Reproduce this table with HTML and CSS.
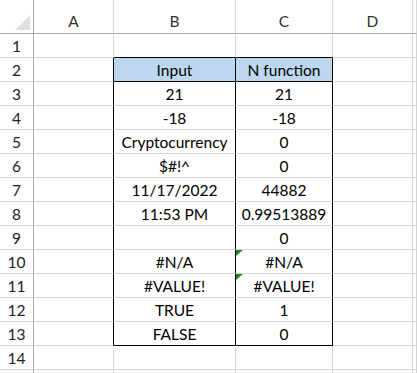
FILE: index.html
```html
<!DOCTYPE html>
<html>
  <head>
    <meta charset="utf-8">
    <link rel="stylesheet" href="styles.css">
    <title>N function</title>
  </head>
  <body>
    <div class="sheet">
      <div class="hd corner"></div><div class="hd">A</div><div class="hd">B</div><div class="hd">C</div><div class="hd">D</div><div class="hd"></div>

      <div class="rn">1</div><div class="c"></div><div class="c edge-b"></div><div class="c edge-b"></div><div class="c"></div><div class="c"></div>
      <div class="rn">2</div><div class="c edge-r"></div><div class="c head edge-r edge-b">Input</div><div class="c head edge-r edge-b">N function</div><div class="c"></div><div class="c"></div>
      <div class="rn">3</div><div class="c edge-r"></div><div class="c edge-r">21</div><div class="c edge-r">21</div><div class="c"></div><div class="c"></div>
      <div class="rn">4</div><div class="c edge-r"></div><div class="c edge-r">-18</div><div class="c edge-r">-18</div><div class="c"></div><div class="c"></div>
      <div class="rn">5</div><div class="c edge-r"></div><div class="c edge-r">Cryptocurrency</div><div class="c edge-r">0</div><div class="c"></div><div class="c"></div>
      <div class="rn">6</div><div class="c edge-r"></div><div class="c edge-r">$#!^</div><div class="c edge-r">0</div><div class="c"></div><div class="c"></div>
      <div class="rn">7</div><div class="c edge-r"></div><div class="c edge-r">11/17/2022</div><div class="c edge-r">44882</div><div class="c"></div><div class="c"></div>
      <div class="rn">8</div><div class="c edge-r"></div><div class="c edge-r">11:53 PM</div><div class="c edge-r">0.99513889</div><div class="c"></div><div class="c"></div>
      <div class="rn">9</div><div class="c edge-r"></div><div class="c edge-r"></div><div class="c edge-r">0</div><div class="c"></div><div class="c"></div>
      <div class="rn">10</div><div class="c edge-r"></div><div class="c edge-r">#N/A</div><div class="c edge-r err">#N/A</div><div class="c"></div><div class="c"></div>
      <div class="rn">11</div><div class="c edge-r"></div><div class="c edge-r">#VALUE!</div><div class="c edge-r err">#VALUE!</div><div class="c"></div><div class="c"></div>
      <div class="rn">12</div><div class="c edge-r"></div><div class="c edge-r">TRUE</div><div class="c edge-r">1</div><div class="c"></div><div class="c"></div>
      <div class="rn">13</div><div class="c edge-r"></div><div class="c edge-r edge-b">FALSE</div><div class="c edge-r edge-b">0</div><div class="c"></div><div class="c"></div>
      <div class="rn">14</div><div class="c"></div><div class="c"></div><div class="c"></div><div class="c"></div><div class="c"></div>
      <div class="rn"></div><div class="c"></div><div class="c"></div><div class="c"></div><div class="c"></div><div class="c"></div>
    </div>
  </body>
</html>
```

FILE: styles.css
```css
* {
  box-sizing: border-box;
}
body {
  margin: 0;
  height: 373px;
  overflow: hidden;
  font-family: Lato, "Noto Sans", sans-serif;
  font-size: 15.5px;
  color: #000;
  background-color: #fff;
}
.sheet {
  display: grid;
  grid-template-columns: 34px 80px 122px 97px 80px 1fr;
  grid-template-rows: 34px repeat(15, 24px);
}
.sheet > div {
  display: flex;
  align-items: flex-end;
  justify-content: center;
  line-height: 1;
  white-space: nowrap;
  overflow: hidden;
}
.hd {
  padding-bottom: 4px;
  color: #333;
  border-right: 1px solid #d9d9d9;
  border-bottom: 1px solid #ababab;
}
.corner {
  position: relative;
  border-right-color: #ababab;
}
.corner::after {
  content: "";
  position: absolute;
  right: 3px;
  bottom: 3px;
  width: 15px;
  height: 15px;
  background-color: #dfdfdf;
  clip-path: polygon(100% 0, 100% 100%, 0 100%);
}
.rn {
  padding-bottom: 3px;
  color: #222;
  border-right: 1px solid #ababab;
  border-bottom: 1px solid #d4d4d4;
}
.c {
  padding-bottom: 3px;
  border-right: 1px solid #d4d4d4;
  border-bottom: 1px solid #d4d4d4;
}
.head {
  background-color: #bdd7ee;
}
.edge-r {
  border-right-color: #000;
}
.edge-b {
  border-bottom-color: #000;
}
/* error indicator in the top left corner of a cell */
.err {
  position: relative;
}
.err::before {
  content: "";
  position: absolute;
  left: 0;
  top: 0;
  width: 7px;
  height: 6px;
  background-color: #1e8b1e;
  clip-path: polygon(0 0, 100% 0, 0 100%);
}
```
